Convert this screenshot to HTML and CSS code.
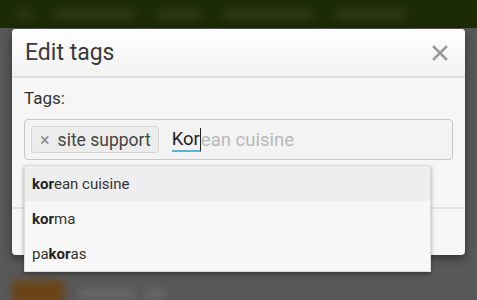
FILE: index.html
```html
<!DOCTYPE html>
<html lang="en">
<head>
  <meta charset="UTF-8">
  <title>Edit tags</title>
  <link rel="stylesheet" href="styles.css">
</head>
<body>
  <!-- Page behind the dialog (dimmed) -->
  <div class="page">
    <div class="navbar">
      <span class="nav-item w1"></span>
      <span class="nav-item w2"></span>
      <span class="nav-item w3"></span>
      <span class="nav-item w4"></span>
      <span class="nav-item w5"></span>
    </div>
    <div class="content">
      <div class="row">
        <span class="thumb"></span>
        <span class="blur-text"></span>
        <span class="blur-text short"></span>
      </div>
    </div>
  </div>

  <!-- Dialog -->
  <div class="modal">
    <div class="modal-header">
      <h2>Edit tags</h2>
      <button class="close" aria-label="Close">
        <svg width="16" height="16" viewBox="0 0 16 16"><path d="M2 2 L14 14 M14 2 L2 14" stroke="#9a9a9a" stroke-width="2.6" stroke-linecap="square"/></svg>
      </button>
    </div>
    <div class="modal-body">
      <label class="label">Tags:</label>
      <div class="tag-input">
        <span class="tag"><span class="tag-x">&times;</span>site support</span>
        <span class="typed"><span class="composing">Kor</span><span class="hint">ean cuisine</span></span>
      </div>
    </div>
    <div class="modal-footer"></div>
  </div>

  <!-- Autocomplete -->
  <ul class="suggestions">
    <li class="active"><b>kor</b>ean cuisine</li>
    <li><b>kor</b>ma</li>
    <li>pa<b>kor</b>as</li>
  </ul>
</body>
</html>
```

FILE: styles.css
```css
/* Base */
* { box-sizing: border-box; margin: 0; padding: 0; }
body { font-family: Roboto, "Noto Sans", sans-serif; background: #585858; color: #333; width: 477px; height: 300px; overflow: hidden; position: relative; }

/* Dimmed page */
.navbar { height: 28px; background: #1d2a06; display: flex; align-items: center; gap: 22px; padding: 0 18px; }
.nav-item { height: 10px; background: #2e3a14; border-radius: 3px; filter: blur(4px); }
.nav-item.w1 { width: 14px; }
.nav-item.w2 { width: 80px; }
.nav-item.w3 { width: 45px; }
.nav-item.w4 { width: 90px; }
.nav-item.w5 { width: 70px; }
.content { padding: 252px 12px 0; }
.row { display: flex; align-items: center; gap: 14px; }
.thumb { width: 52px; height: 26px; background: #6a4416; border-radius: 3px; filter: blur(4px); }
.blur-text { width: 58px; height: 9px; background: #666; filter: blur(3px); }
.blur-text.short { width: 22px; margin-left: -6px; }

/* Dialog */
.modal { position: absolute; left: 12px; top: 29px; width: 453px; height: 226px; background: #f6f6f6; border-radius: 4px; box-shadow: 0 3px 10px rgba(0,0,0,0.45); overflow: hidden; }
.modal-header { height: 49px; background: linear-gradient(#ffffff, #f2f2f2); border-bottom: 2px solid #dedede; display: flex; align-items: center; justify-content: space-between; padding: 0 17px 0 13px; }
.modal-header h2 { font-size: 23px; font-weight: 400; color: #3a3a3a; }
.close { background: none; border: none; display: flex; }

.modal-body { padding: 10px 12px 0; height: 129px; }
.label { display: block; font-size: 17px; color: #333; margin-bottom: 11px; }
.tag-input { height: 41px; border: 1px solid #c6c6c6; border-radius: 4px; background: #f3f3f3; display: flex; align-items: center; padding: 0 6px; gap: 13px; }
.tag { display: flex; align-items: center; height: 27px; padding: 0 7px 0 8px; border: 1px solid #d6d6d6; border-radius: 3px; background: #ececec; font-size: 17.5px; color: #444; }
.tag-x { color: #8c8c8c; font-size: 18px; margin-right: 8px; }
.typed { font-size: 18.5px; display: flex; align-items: center; }
.composing { color: #222; border-bottom: 2px solid #5bb3d8; border-right: 1px solid #222; line-height: 22px; }
.hint { color: #b9b9b9; }

.modal-footer { border-top: 2px solid #e2e2e2; height: 48px; }

/* Autocomplete */
.suggestions { position: absolute; left: 24px; top: 165px; width: 407px; list-style: none; background: #f7f7f7; border: 1px solid #dcdcdc; box-shadow: 0 2px 4px rgba(0,0,0,0.35); }
.suggestions li { height: 35px; display: flex; align-items: center; padding-left: 7px; font-size: 15px; color: #333; }
.suggestions li.active { background: #eeeeee; }
.suggestions b { font-weight: 700; color: #222; }
```
